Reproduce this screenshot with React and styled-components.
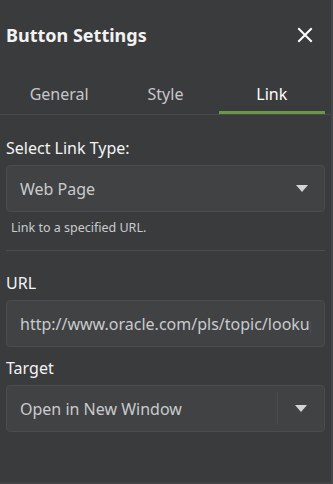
import React, { useState } from "react";
import styled, { createGlobalStyle } from "styled-components";

const GlobalStyle = createGlobalStyle`
  html, body {
    margin: 0;
    padding: 0;
    background: #3a3b3d;
  }
  * { box-sizing: border-box; }
`;

// Styled components
const Panel = styled.div`
  width: 333px;
  height: 484px;
  background: #3a3b3d;
  font-family: "Noto Sans", "Open Sans", sans-serif;
  color: #f2f2f2;
  border-right: 2px solid #46474a;
  border-bottom: 2px solid #424345;
  overflow: hidden;
`;

const Header = styled.div`
  display: flex;
  align-items: center;
  justify-content: space-between;
  height: 70px;
  padding: 0 17px 0 6px;
`;

const Title = styled.h2`
  margin: 0;
  font-size: 18px;
  font-weight: 700;
`;

const CloseButton = styled.button`
  display: flex;
  align-items: center;
  justify-content: center;
  width: 18px;
  height: 18px;
  padding: 0;
  border: 0;
  background: none;
  cursor: pointer;
`;

const Tabs = styled.div`
  display: grid;
  grid-template-columns: repeat(3, 1fr);
  padding: 0 6px;
  border-bottom: 1px solid #48494b;
`;

const Tab = styled.button`
  height: 44px;
  padding: 6px 0 0;
  border: 0;
  background: none;
  font-family: inherit;
  font-size: 16px;
  color: ${(p) => (p.$active ? "#ffffff" : "#c6c7c8")};
  border-bottom: 3px solid ${(p) => (p.$active ? "#6c9648" : "transparent")};
  cursor: pointer;
`;

const Body = styled.div`
  padding: 0 6px;
`;

const Label = styled.div`
  font-size: 16px;
  color: #f4f4f4;
  margin: ${(p) => p.$top || "12px"} 0 6px;
  line-height: 22px;
`;

const Field = styled.div`
  display: flex;
  align-items: center;
  height: 47px;
  background: #414244;
  border: 1px solid #4b4c4f;
  border-radius: 4px;
  overflow: hidden;
`;

const FieldText = styled.div`
  flex: 1;
  padding-left: 13px;
  font-size: 16px;
  color: #c9cbcd;
  white-space: nowrap;
  overflow: hidden;
`;

const TextInput = styled.input`
  display: block;
  width: 100%;
  height: 47px;
  padding: 0 13px;
  background: #414244;
  border: 1px solid #4b4c4f;
  border-radius: 4px;
  font-family: inherit;
  font-size: 16px;
  color: #c9cbcd;
  outline: none;
`;

const Arrow = styled.div`
  display: flex;
  align-items: center;
  justify-content: center;
  width: ${(p) => (p.$split ? "46px" : "44px")};
  height: 100%;
  &::before {
    content: "";
    display: block;
    width: 0;
    height: 0;
    border-left: 6px solid transparent;
    border-right: 6px solid transparent;
    border-top: 7px solid #d2d4d6;
  }
`;

const Divider = styled.div`
  width: 1px;
  align-self: stretch;
  margin: 6px 0;
  background: #4b4c4f;
`;

const Help = styled.div`
  font-size: 12.5px;
  color: #c9cbcd;
  padding: 7px 0 0 5px;
  line-height: 18px;
`;

const Rule = styled.hr`
  margin: 13px 0 0;
  border: 0;
  border-top: 1px solid #4c4d50;
`;

const CloseIcon = () => (
  <svg width="16" height="16" viewBox="0 0 16 16">
    <path d="M2 2 L14 14 M14 2 L2 14" stroke="#ffffff" strokeWidth="2" strokeLinecap="square" />
  </svg>
);

const tabs = ["General", "Style", "Link"];

const App = () => {
  const [tab, setTab] = useState("Link");
  const [url, setUrl] = useState("http://www.oracle.com/pls/topic/lookup?ctx=cloud");

  return (
    <Panel>
      <GlobalStyle />
      <Header>
        <Title>Button Settings</Title>
        <CloseButton title="Close">
          <CloseIcon />
        </CloseButton>
      </Header>
      <Tabs>
        {tabs.map((t) => (
          <Tab key={t} $active={t === tab} onClick={() => setTab(t)}>
            {t}
          </Tab>
        ))}
      </Tabs>
      <Body>
        <Label $top="22px">Select Link Type:</Label>
        <Field>
          <FieldText>Web Page</FieldText>
          <Arrow />
        </Field>
        <Help>Link to a specified URL.</Help>
        <Rule />
        <Label $top="21px">URL</Label>
        <TextInput value={url} onChange={(e) => setUrl(e.target.value)} />
        <Label $top="10px">Target</Label>
        <Field>
          <FieldText>Open in New Window</FieldText>
          <Divider />
          <Arrow $split />
        </Field>
      </Body>
    </Panel>
  );
};

export default App;
